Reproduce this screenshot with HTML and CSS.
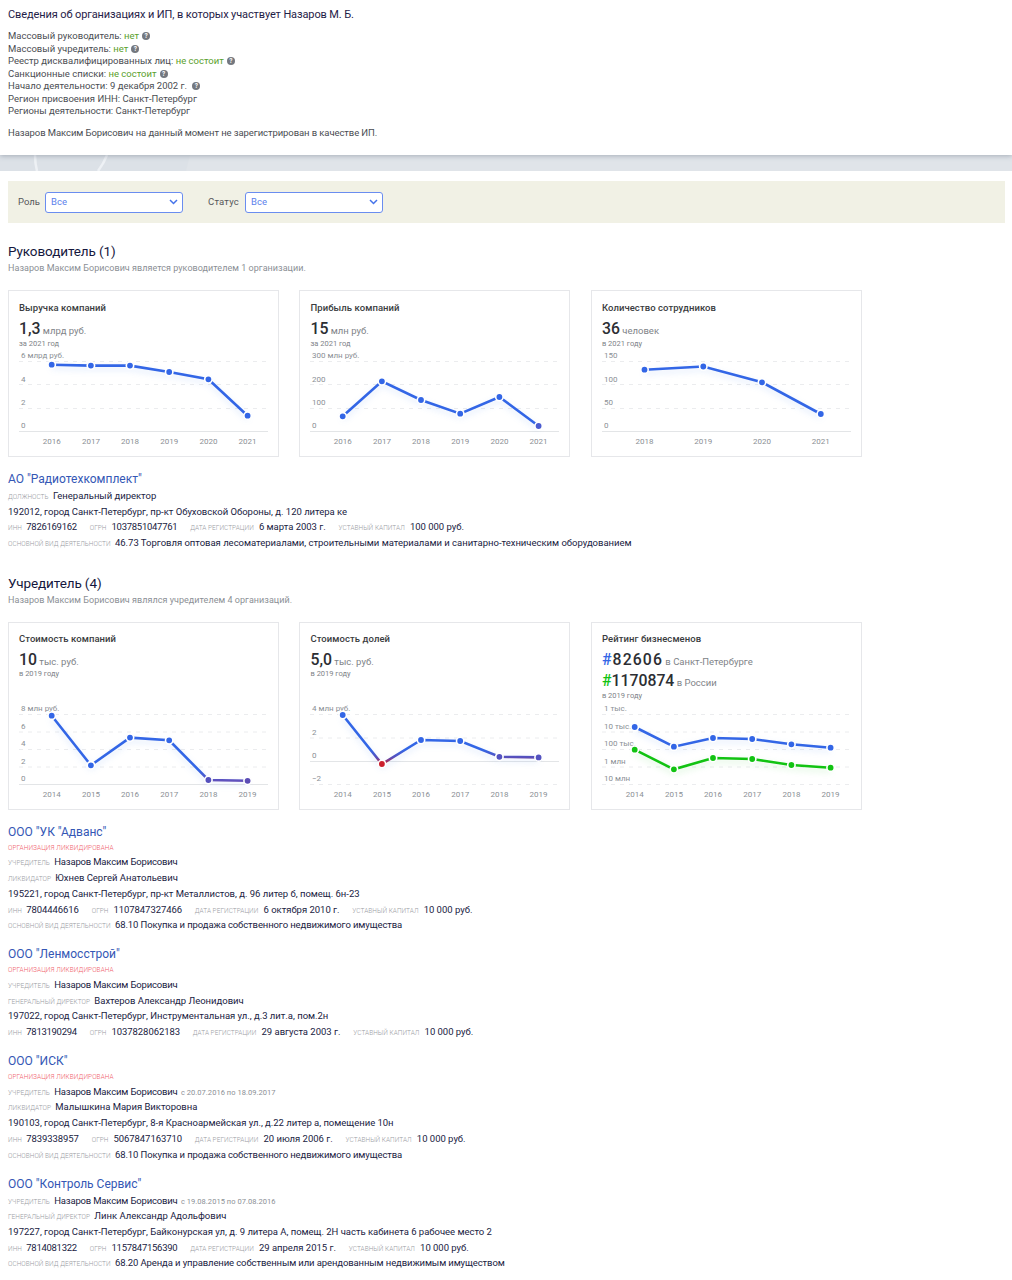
FILE: index.html
```
<!DOCTYPE html>
<html lang="ru">
<head>
    <meta charset="UTF-8">
    <meta name="viewport" content="width=device-width, initial-scale=1.0">
    <title>Назаров М. Б. — сведения об организациях и ИП</title>
    <link rel="stylesheet" href="styles.css">
</head>
<body>
    <!-- Сводка по человеку -->
    <header class="summary">
        <h1>Сведения об организациях и ИП, в которых участвует Назаров М. Б.</h1>
        <ul class="facts">
            <li>Массовый руководитель: <span class="ok">нет</span> <i class="help">?</i></li>
            <li>Массовый учредитель: <span class="ok">нет</span> <i class="help">?</i></li>
            <li>Реестр дисквалифицированных лиц: <span class="ok">не состоит</span> <i class="help">?</i></li>
            <li>Санкционные списки: <span class="ok">не состоит</span> <i class="help">?</i></li>
            <li>Начало деятельности: 9 декабря 2002 г. <i class="help">?</i></li>
            <li>Регион присвоения ИНН: Санкт-Петербург</li>
            <li>Регионы деятельности: Санкт-Петербург</li>
        </ul>
        <p>Назаров Максим Борисович на данный момент не зарегистрирован в качестве ИП.</p>
    </header>
    <div class="strip">
        <svg width="190" height="16" viewBox="0 0 190 16" fill="none">
            <path d="M0 0h190l-4 16H0z" fill="#d8dde4" opacity=".4"/>
            <path d="M35 0q0 8 2 16M107 0q-3 8-9 16" stroke="#eef1f5" stroke-width="2.5"/>
        </svg>
    </div>

    <main>
        <!-- Фильтры -->
        <form class="filters">
            <label>Роль</label>
            <div class="select">Все <svg width="9" height="6" viewBox="0 0 9 6"><path d="M1 1l3.5 3.5L8 1"/></svg></div>
            <label class="second">Статус</label>
            <div class="select">Все <svg width="9" height="6" viewBox="0 0 9 6"><path d="M1 1l3.5 3.5L8 1"/></svg></div>
        </form>

        <section class="role">
            <h2>Руководитель (1)</h2>
            <p class="note">Назаров Максим Борисович является руководителем 1 организации.</p>

            <div class="cards">
                <div class="card">
                    <h3>Выручка компаний</h3>
                    <div class="value"><b>1,3</b> млрд руб.</div>
                    <div class="period">за 2021 год</div>
                    <svg class="chart" width="249" height="98" viewBox="0 0 249 98">
                        <path class="grid" d="M0 11.5h249M0 34.5h249M0 58.5h249"/>
                        <path class="axis" d="M0 81.5h249"/>
                        <g class="scale"><text x="2" y="8.3">6 млрд руб.</text><text x="2" y="31.8">4</text><text x="2" y="54.8">2</text><text x="2" y="78.3">0</text></g>
                        <g class="years"><text x="32.7" y="93.5">2016</text><text x="71.9" y="93.5">2017</text><text x="111" y="93.5">2018</text><text x="150.2" y="93.5">2019</text><text x="189.4" y="93.5">2020</text><text x="228.6" y="93.5">2021</text></g>
                        <polyline class="line" points="32.7,14.7 71.9,15.6 111,15.6 150.2,22 189.4,29.3 228.6,65.7"/>
                        <g class="dots"><circle cx="32.7" cy="14.7" r="3.7"/><circle cx="71.9" cy="15.6" r="3.7"/><circle cx="111" cy="15.6" r="3.7"/><circle cx="150.2" cy="22" r="3.7"/><circle cx="189.4" cy="29.3" r="3.7"/><circle cx="228.6" cy="65.7" r="3.7"/></g>
                    </svg>
                </div>
                <div class="card">
                    <h3>Прибыль компаний</h3>
                    <div class="value"><b>15</b> млн руб.</div>
                    <div class="period">за 2021 год</div>
                    <svg class="chart" width="249" height="98" viewBox="0 0 249 98">
                        <path class="grid" d="M0 11.5h249M0 34.5h249M0 58.5h249"/>
                        <path class="axis" d="M0 81.5h249"/>
                        <g class="scale"><text x="2" y="8.3">300 млн руб.</text><text x="2" y="31.8">200</text><text x="2" y="54.8">100</text><text x="2" y="78.3">0</text></g>
                        <g class="years"><text x="32.7" y="93.5">2016</text><text x="71.9" y="93.5">2017</text><text x="111" y="93.5">2018</text><text x="150.2" y="93.5">2019</text><text x="189.4" y="93.5">2020</text><text x="228.6" y="93.5">2021</text></g>
                        <polyline class="line" points="32.7,66.3 71.9,31.3 111,50 150.2,63.7 189.4,47 228.6,76"/>
                        <g class="dots"><circle cx="32.7" cy="66.3" r="3.7"/><circle cx="71.9" cy="31.3" r="3.7"/><circle cx="111" cy="50" r="3.7"/><circle cx="150.2" cy="63.7" r="3.7"/><circle cx="189.4" cy="47" r="3.7"/><circle cx="228.6" cy="76" r="3.7" fill="#4a5bd0"/></g>
                    </svg>
                </div>
                <div class="card">
                    <h3>Количество сотрудников</h3>
                    <div class="value"><b>36</b> человек</div>
                    <div class="period">в 2021 году</div>
                    <svg class="chart" width="249" height="98" viewBox="0 0 249 98">
                        <path class="grid" d="M0 11.5h249M0 34.5h249M0 58.5h249"/>
                        <path class="axis" d="M0 81.5h249"/>
                        <g class="scale"><text x="2" y="8.3">150</text><text x="2" y="31.8">100</text><text x="2" y="54.8">50</text><text x="2" y="78.3">0</text></g>
                        <g class="years"><text x="42.5" y="93.5">2018</text><text x="101.3" y="93.5">2019</text><text x="160" y="93.5">2020</text><text x="218.8" y="93.5">2021</text></g>
                        <polyline class="line" points="42.5,19.7 101.3,16.5 160,32.3 218.8,64"/>
                        <g class="dots"><circle cx="42.5" cy="19.7" r="3.7"/><circle cx="101.3" cy="16.5" r="3.7"/><circle cx="160" cy="32.3" r="3.7"/><circle cx="218.8" cy="64" r="3.7"/></g>
                    </svg>
                </div>
            </div>

            <article class="org">
                <h4><a href="#">АО "Радиотехкомплект"</a></h4>
                <p><span class="cap">должность</span> Генеральный директор</p>
                <p>192012, город Санкт-Петербург, пр-кт Обуховской Обороны, д. 120 литера ке</p>
                <p><span class="cap">инн</span> <span class="num">7826169162</span> <span class="cap gap">огрн</span> <span class="num">1037851047761</span> <span class="cap gap">дата регистрации</span> 6 марта 2003 г. <span class="cap gap">уставный капитал</span> 100 000 руб.</p>
                <p><span class="cap">основной вид деятельности</span> 46.73 Торговля оптовая лесоматериалами, строительными материалами и санитарно-техническим оборудованием</p>
            </article>
        </section>

        <section class="role founder">
            <h2>Учредитель (4)</h2>
            <p class="note">Назаров Максим Борисович являлся учредителем 4 организаций.</p>

            <div class="cards tall">
                <div class="card">
                    <h3>Стоимость компаний</h3>
                    <div class="value"><b>10</b> тыс. руб.</div>
                    <div class="period">в 2019 году</div>
                    <svg class="chart" width="249" height="98" viewBox="0 0 249 98">
                        <defs>
                            <linearGradient id="low" gradientUnits="userSpaceOnUse" x1="0" y1="68" x2="0" y2="84"><stop offset="0" stop-color="#3366e6"/><stop offset="1" stop-color="#7545a8"/></linearGradient>
                        </defs>
                        <path class="grid" d="M0 12.5h249M0 30h249M0 47.5h249M0 65h249"/>
                        <path class="axis" d="M0 82.5h249"/>
                        <g class="scale"><text x="2" y="9.3">8 млн руб.</text><text x="2" y="26.8">6</text><text x="2" y="44.3">4</text><text x="2" y="61.8">2</text><text x="2" y="79.3">0</text></g>
                        <g class="years"><text x="32.7" y="95">2014</text><text x="71.9" y="95">2015</text><text x="111" y="95">2016</text><text x="150.2" y="95">2017</text><text x="189.4" y="95">2018</text><text x="228.6" y="95">2019</text></g>
                        <polyline class="line line-low" points="32.7,13.7 71.9,63.3 111,35.6 150.2,38.3 189.4,78 228.6,78.8"/>
                        <g class="dots"><circle cx="32.7" cy="13.7" r="3.7"/><circle cx="71.9" cy="63.3" r="3.7"/><circle cx="111" cy="35.6" r="3.7"/><circle cx="150.2" cy="38.3" r="3.7"/><circle cx="189.4" cy="78" r="3.7" fill="#5450bd"/><circle cx="228.6" cy="78.8" r="3.7" fill="#5b4cb5"/></g>
                    </svg>
                </div>
                <div class="card">
                    <h3>Стоимость долей</h3>
                    <div class="value"><b>5,0</b> тыс. руб.</div>
                    <div class="period">в 2019 году</div>
                    <svg class="chart" width="249" height="98" viewBox="0 0 249 98">
                        <defs>
                            <linearGradient id="loss" gradientUnits="userSpaceOnUse" x1="0" y1="48" x2="0" y2="62"><stop offset="0" stop-color="#3366e6"/><stop offset=".55" stop-color="#5a4db8"/><stop offset="1" stop-color="#cc1f2d"/></linearGradient>
                        </defs>
                        <path class="grid" d="M0 12.5h249M0 36h249M0 82.5h249"/>
                        <path class="axis" d="M0 59.5h249"/>
                        <g class="scale"><text x="2" y="9.3">4 млн руб.</text><text x="2" y="32.8">2</text><text x="2" y="55.8">0</text><text x="2" y="79.3">−2</text></g>
                        <g class="years"><text x="32.7" y="95">2014</text><text x="71.9" y="95">2015</text><text x="111" y="95">2016</text><text x="150.2" y="95">2017</text><text x="189.4" y="95">2018</text><text x="228.6" y="95">2019</text></g>
                        <polyline class="line line-loss" points="32.7,13 71.9,62 111,38 150.2,39 189.4,54.8 228.6,55.4"/>
                        <g class="dots"><circle cx="32.7" cy="13" r="3.7"/><circle cx="71.9" cy="62" r="3.7" fill="#cc1f2d"/><circle cx="111" cy="38" r="3.7"/><circle cx="150.2" cy="39" r="3.7"/><circle cx="189.4" cy="54.8" r="3.7" fill="#5352c0"/><circle cx="228.6" cy="55.4" r="3.7" fill="#5352c0"/></g>
                    </svg>
                </div>
                <div class="card">
                    <h3>Рейтинг бизнесменов</h3>
                    <div class="value"><b class="wide"><span class="blue">#</span>82606</b> в Санкт-Петербурге</div>
                    <div class="value"><b><span class="green">#</span>1170874</b> в России</div>
                    <div class="period">в 2019 году</div>
                    <svg class="chart" width="249" height="98" viewBox="0 0 249 98">
                        <path class="grid" d="M0 12.5h249M0 30h249M0 47.5h249M0 65h249M0 82.5h249"/>
                        <g class="scale"><text x="2" y="9.3">1 тыс.</text><text x="2" y="26.8">10 тыс.</text><text x="2" y="44.3">100 тыс.</text><text x="2" y="61.8">1 млн</text><text x="2" y="79.3">10 млн</text></g>
                        <g class="years"><text x="32.7" y="95">2014</text><text x="71.9" y="95">2015</text><text x="111" y="95">2016</text><text x="150.2" y="95">2017</text><text x="189.4" y="95">2018</text><text x="228.6" y="95">2019</text></g>
                        <polyline class="line" points="32.7,25 71.9,44.7 111,36 150.2,37 189.4,42.3 228.6,45.7"/>
                        <g class="dots"><circle cx="32.7" cy="25" r="3.7"/><circle cx="71.9" cy="44.7" r="3.7"/><circle cx="111" cy="36" r="3.7"/><circle cx="150.2" cy="37" r="3.7"/><circle cx="189.4" cy="42.3" r="3.7"/><circle cx="228.6" cy="45.7" r="3.7"/></g>
                        <polyline class="line line-green" points="32.7,47.7 71.9,67.3 111,56 150.2,57 189.4,63 228.6,65.7"/>
                        <g class="dots dots-green"><circle cx="32.7" cy="47.7" r="3.7"/><circle cx="71.9" cy="67.3" r="3.7"/><circle cx="111" cy="56" r="3.7"/><circle cx="150.2" cy="57" r="3.7"/><circle cx="189.4" cy="63" r="3.7"/><circle cx="228.6" cy="65.7" r="3.7"/></g>
                    </svg>
                </div>
            </div>

            <article class="org">
                <h4><a href="#">ООО "УК "Адванс"</a></h4>
                <p class="closed">Организация ликвидирована</p>
                <p><span class="cap">учредитель</span> <span class="person">Назаров Максим Борисович</span></p>
                <p><span class="cap">ликвидатор</span> Юхнев Сергей Анатольевич</p>
                <p>195221, город Санкт-Петербург, пр-кт Металлистов, д. 96 литер б, помещ. 6н-23</p>
                <p><span class="cap">инн</span> <span class="num loose">7804446616</span> <span class="cap gap">огрн</span> <span class="num loose">1107847327466</span> <span class="cap gap">дата регистрации</span> 6 октября 2010 г. <span class="cap gap">уставный капитал</span> 10 000 руб.</p>
                <p><span class="cap">основной вид деятельности</span> <span class="activity">68.10 Покупка и продажа собственного недвижимого имущества</span></p>
            </article>
            <article class="org">
                <h4><a href="#">ООО "Ленмосстрой"</a></h4>
                <p class="closed">Организация ликвидирована</p>
                <p><span class="cap">учредитель</span> <span class="person">Назаров Максим Борисович</span></p>
                <p><span class="cap">генеральный директор</span> Вахтеров Александр Леонидович</p>
                <p>197022, город Санкт-Петербург, Инструментальная ул., д.3 лит.а, пом.2н</p>
                <p><span class="cap">инн</span> <span class="num">7813190294</span> <span class="cap gap">огрн</span> <span class="num loose">1037828062183</span> <span class="cap gap">дата регистрации</span> 29 августа 2003 г. <span class="cap gap">уставный капитал</span> 10 000 руб.</p>
            </article>
            <article class="org">
                <h4><a href="#">ООО "ИСК"</a></h4>
                <p class="closed">Организация ликвидирована</p>
                <p><span class="cap">учредитель</span> <span class="person">Назаров Максим Борисович</span> <small>с 20.07.2016 по 18.09.2017</small></p>
                <p><span class="cap">ликвидатор</span> Малышкина Мария Викторовна</p>
                <p>190103, город Санкт-Петербург, 8-я Красноармейская ул., д.22 литер а, помещение 10н</p>
                <p><span class="cap">инн</span> <span class="num loose">7839338957</span> <span class="cap gap">огрн</span> <span class="num loose">5067847163710</span> <span class="cap gap">дата регистрации</span> 20 июля 2006 г. <span class="cap gap">уставный капитал</span> 10 000 руб.</p>
                <p><span class="cap">основной вид деятельности</span> <span class="activity">68.10 Покупка и продажа собственного недвижимого имущества</span></p>
            </article>
            <article class="org">
                <h4><a href="#">ООО "Контроль Сервис"</a></h4>
                <p><span class="cap">учредитель</span> <span class="person">Назаров Максим Борисович</span> <small>с 19.08.2015 по 07.08.2016</small></p>
                <p><span class="cap">генеральный директор</span> Линк Александр Адольфович</p>
                <p>197227, город Санкт-Петербург, Байконурская ул, д. 9 литера А, помещ. 2Н часть кабинета 6 рабочее место 2</p>
                <p><span class="cap">инн</span> <span class="num">7814081322</span> <span class="cap gap">огрн</span> <span class="num">1157847156390</span> <span class="cap gap">дата регистрации</span> 29 апреля 2015 г. <span class="cap gap">уставный капитал</span> 10 000 руб.</p>
                <p><span class="cap">основной вид деятельности</span> <span class="activity">68.20 Аренда и управление собственным или арендованным недвижимым имуществом</span></p>
            </article>
        </section>
    </main>
</body>
</html>
```
FILE: styles.css
```
* {
    box-sizing: border-box;
}

body {
    margin: 0;
    height: 1280px;
    overflow: hidden;
    background: #fff;
    color: #4a4d52;
    font: 9.5px/12.5px Roboto, "Liberation Sans", sans-serif;
}

h1, h2, h3, h4, p, ul {
    margin: 0;
    padding: 0;
    font-weight: 400;
}

/* Сводка */
.summary {
    position: relative;
    height: 155px;
    padding: 7px 8px 0;
    background: #fff;
    box-shadow: 0 1px 5px rgba(60, 75, 95, .35);
}

.summary h1 {
    color: #1f2147;
    font-size: 11px;
    line-height: 16px;
    letter-spacing: -.11px;
    margin-bottom: 7px;
}

.summary p {
    letter-spacing: -.09px;
}

.facts {
    list-style: none;
    margin-bottom: 9px;
}

.facts li {
    display: flex;
    align-items: center;
    height: 12.5px;
    white-space: pre;
}

.ok {
    color: #5aa02c;
}

.help {
    width: 8px;
    height: 8px;
    margin-left: 3px;
    border-radius: 50%;
    background: #74787f;
    color: #fff;
    font: bold 6.5px/8px Roboto, sans-serif;
    text-align: center;
}

.strip {
    height: 16px;
    background: #e0e4e9;
}

.strip svg {
    display: block;
}

main {
    padding: 10px 7px 0 8px;
}

/* Фильтры */
.filters {
    display: flex;
    align-items: center;
    height: 42px;
    padding-left: 10px;
    background: #f1f1e5;
    color: #55575a;
}

.filters label {
    width: 27px;
}

.filters .second {
    width: 37px;
    margin-left: 25px;
    letter-spacing: .2px;
}

.select {
    display: flex;
    align-items: center;
    justify-content: space-between;
    width: 138px;
    height: 21px;
    padding: 0 4px 0 5px;
    border: 1px solid #6a8df0;
    border-radius: 3px;
    background: #fff;
    color: #5b7fec;
}

.select svg {
    fill: none;
    stroke: #4573ea;
    stroke-width: 1.5;
}

/* Разделы */
.role {
    padding-top: 19px;
}

.founder {
    padding-top: 23px;
}

.role h2 {
    color: #15173d;
    font-size: 13.5px;
    line-height: 18px;
    letter-spacing: -.1px;
}

.note {
    margin: 1px 0 15px;
    color: #8b8f95;
    font-size: 9px;
    line-height: 14px;
    letter-spacing: .04px;
}

.cards {
    display: flex;
    gap: 20.9px;
}

.card {
    display: flex;
    flex-direction: column;
    width: 270.6px;
    height: 167px;
    padding: 10px 10px 8px;
    border: 1px solid #e6e7ea;
}

.tall .card {
    height: 188px;
    padding-top: 9px;
    padding-bottom: 9px;
}

.card h3 {
    color: #3a3c40;
    font-size: 9.5px;
    font-weight: 500;
    line-height: 13px;
    letter-spacing: .07px;
    margin-bottom: 4px;
}

.value {
    height: 21.5px;
    color: #808388;
    font-size: 9.5px;
    line-height: 21.5px;
    white-space: nowrap;
}

.value b {
    color: #2c2e33;
    font-size: 15.8px;
    font-weight: 500;
}

.value .wide {
    letter-spacing: 1.1px;
}

.value .blue {
    color: #3366e6;
}

.value .green {
    color: #12c312;
}

.period {
    color: #808388;
    font-size: 7.5px;
    line-height: 8px;
}

.chart {
    display: block;
    margin-top: auto;
    overflow: visible;
}

.chart text {
    font-size: 8px;
    fill: #8b8f95;
}

.years text {
    text-anchor: middle;
}

.grid {
    stroke: #ebecee;
    stroke-dasharray: 4 5;
}

.axis {
    stroke: #e3e5e7;
}

.line {
    fill: none;
    stroke: #3366e6;
    stroke-width: 2.6;
    filter: drop-shadow(0 3px 3px rgba(51, 120, 240, .18));
}

.line-low {
    stroke: url(#low);
}

.line-loss {
    stroke: url(#loss);
}

.line-green {
    stroke: #12c312;
    filter: drop-shadow(0 3px 3px rgba(18, 195, 18, .18));
}

.dots {
    fill: #3366e6;
    stroke: #fff;
    stroke-width: 1.6;
}

.dots-green {
    fill: #12c312;
}

/* Организации */
.org {
    padding-top: 13px;
    color: #20223f;
}

.org + .org {
    padding-top: 12.4px;
}

.org h4 {
    font-size: 12px;
    line-height: 18px;
}

.org a {
    color: #3457b5;
    text-decoration: none;
}

.org p {
    height: 15.7px;
    line-height: 15.7px;
    letter-spacing: -.02px;
    white-space: nowrap;
}

.num {
    letter-spacing: -.28px;
}

.loose {
    letter-spacing: -.08px;
}

.person {
    letter-spacing: -.17px;
}

.activity {
    letter-spacing: -.11px;
}

.cap {
    margin-right: 2px;
    color: #9a9ca3;
    font-size: 6.5px;
    font-weight: 300;
    letter-spacing: .03px;
    text-transform: uppercase;
}

.cap.gap {
    margin-left: 10.5px;
    margin-right: 2.8px;
}

.org .closed {
    height: 13.7px;
    color: #f0606a;
    font-size: 6.5px;
    font-weight: 300;
    line-height: 14px;
    letter-spacing: .07px;
    text-transform: uppercase;
}

.org small {
    margin-left: 1px;
    color: #8b8f95;
    font-size: 7.5px;
    letter-spacing: .04px;
}
```
